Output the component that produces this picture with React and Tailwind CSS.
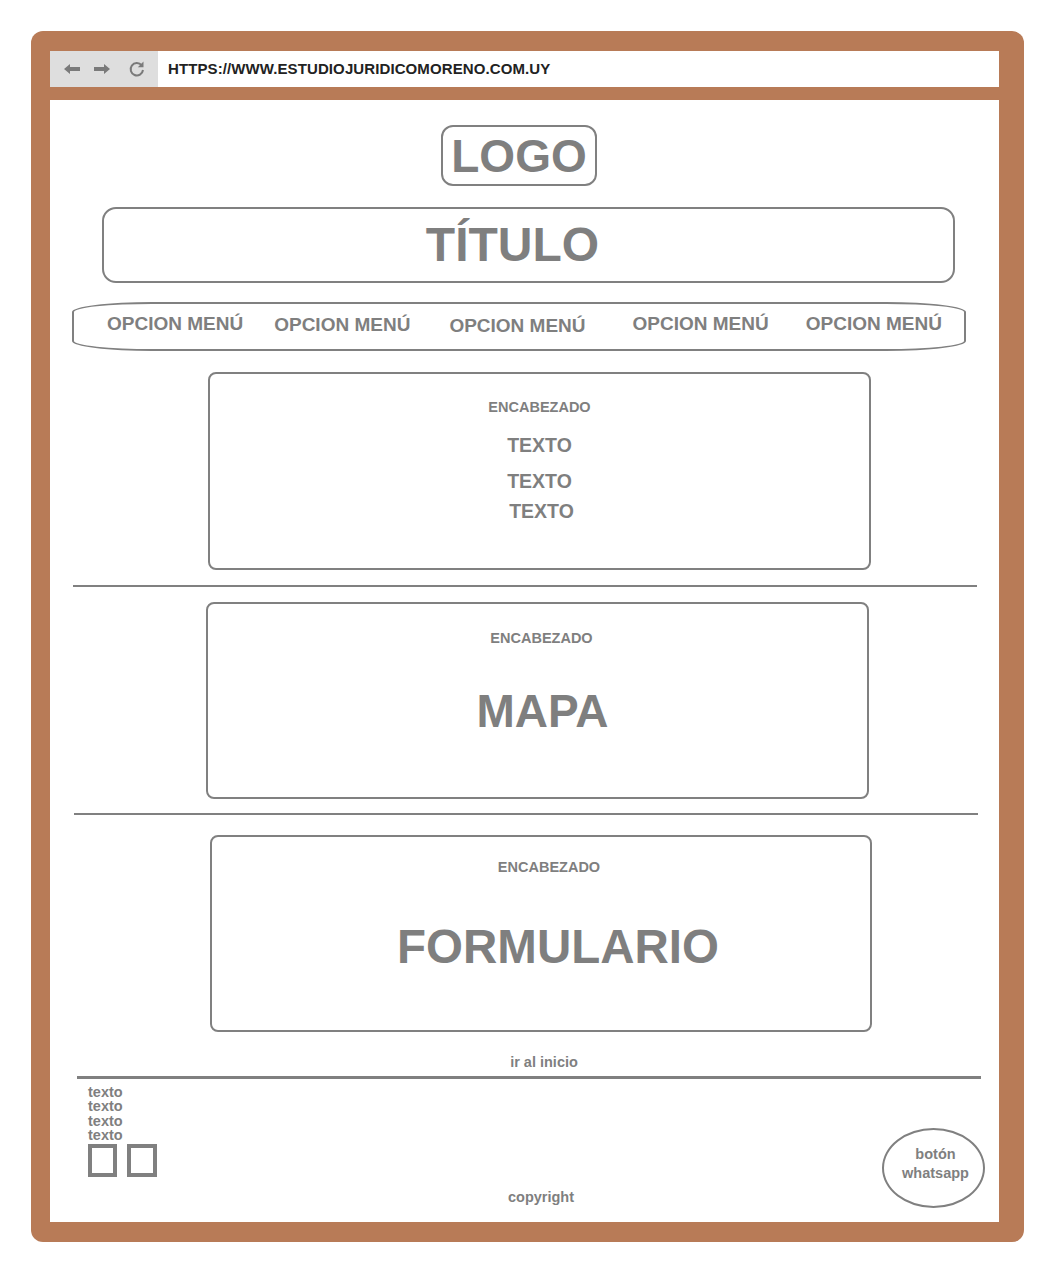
import React from 'react'

const menu = [
  { label: 'OPCION MENÚ', cls: 'ml-[33px]' },
  { label: 'OPCION MENÚ', cls: 'ml-[31px] mt-[1px]' },
  { label: 'OPCION MENÚ', cls: 'ml-[39px] mt-[2px]' },
  { label: 'OPCION MENÚ', cls: 'ml-[47px]' },
  { label: 'OPCION MENÚ', cls: 'ml-[37px]' },
]

function BrowserIcons(){
  return (
    <div className="w-[108px] h-full bg-[#dedede] flex items-center pl-[14px] gap-[14px]">
      <svg width="16" height="12" viewBox="0 0 16 12">
        <polygon points="0,6 6,1 6,4 16,4 16,8 6,8 6,11" fill="#7a7a7a" />
      </svg>
      <svg width="16" height="12" viewBox="0 0 16 12">
        <polygon points="16,6 10,1 10,4 0,4 0,8 10,8 10,11" fill="#7a7a7a" />
      </svg>
      <svg width="18" height="18" viewBox="0 0 18 18" className="ml-[4px]">
        <path d="M13.6 5.2 A6.2 6.2 0 1 0 15 10" fill="none" stroke="#7a7a7a" strokeWidth="2" />
        <polygon points="15.5,1.5 15.5,7.2 9.8,7.2" fill="#7a7a7a" />
      </svg>
    </div>
  )
}

export default function App(){
  return (
    <div className="w-[1056px] h-[1269px] bg-white pt-[31px] pl-[31px] font-['Liberation_Sans',Arial,sans-serif] text-[#7f7f7f]">
      <div className="w-[993px] h-[1211px] bg-[#b87b57] rounded-[12px] pt-[20px] pl-[19px] pr-[25px] pb-[20px]">
        {/* barra del navegador */}
        <div className="h-[36px] bg-white flex items-center">
          <BrowserIcons />
          <span className="ml-[10px] text-[15px] font-bold text-[#222] tracking-[0.1px]">HTTPS://WWW.ESTUDIOJURIDICOMORENO.COM.UY</span>
        </div>

        <div className="mt-[13px] h-[1122px] bg-white relative flex flex-col">
          <div className="mt-[25px] ml-[391px] w-[156px] h-[61px] border-2 border-[#808080] rounded-[12px] flex items-center justify-center">
            <span className="text-[46px] font-bold leading-none">LOGO</span>
          </div>

          <div className="mt-[21px] ml-[52px] w-[853px] h-[76px] border-2 border-[#808080] rounded-[14px] flex items-center justify-center pr-[32px]">
            <span className="text-[48px] font-bold leading-none">TÍTULO</span>
          </div>

          <div className="mt-[19px] ml-[22px] w-[894px] h-[49px] border-2 border-[#808080] rounded-[80px/10px] flex items-start pt-[8px]">
            {menu.map((m, i) => (
              <span key={i} className={`${m.cls} text-[19px] font-bold leading-[24px] whitespace-nowrap`}>{m.label}</span>
            ))}
          </div>

          <div className="mt-[21px] ml-[158px] w-[663px] h-[198px] border-2 border-[#808080] rounded-[8px] flex flex-col items-center pt-[23px]">
            <span className="text-[14.5px] font-bold leading-[20px]">ENCABEZADO</span>
            <span className="mt-[16px] text-[19.5px] font-bold leading-[24px]">TEXTO</span>
            <span className="mt-[12px] text-[19.5px] font-bold leading-[24px]">TEXTO</span>
            <span className="mt-[6px] ml-[4px] text-[19.5px] font-bold leading-[24px]">TEXTO</span>
          </div>

          <div className="mt-[15px] ml-[23px] w-[904px] h-[2px] bg-[#808080]" />

          <div className="mt-[15px] ml-[156px] w-[663px] h-[197px] border-2 border-[#808080] rounded-[8px] flex flex-col items-center pt-[24px]">
            <span className="ml-[8px] text-[14.5px] font-bold leading-[20px]">ENCABEZADO</span>
            <span className="mt-[37px] ml-[10px] text-[46px] font-bold leading-[52px]">MAPA</span>
          </div>

          <div className="mt-[14px] ml-[24px] w-[904px] h-[2px] bg-[#808080]" />

          <div className="mt-[20px] ml-[160px] w-[662px] h-[197px] border-2 border-[#808080] rounded-[8px] flex flex-col items-center pt-[20px]">
            <span className="ml-[16px] text-[14.5px] font-bold leading-[20px]">ENCABEZADO</span>
            <span className="mt-[44px] ml-[34px] text-[47.5px] font-bold leading-[52px]">FORMULARIO</span>
          </div>

          <div className="mt-[20px] ml-[460px] w-[68px] text-center text-[14.5px] font-bold leading-[20px]">ir al inicio</div>

          <div className="mt-[4px] ml-[27px] w-[904px] h-[3px] bg-[#808080]" />

          <div className="pl-[38px] mt-[6px] flex flex-col">
            <span className="text-[14.5px] font-bold leading-[14.3px]">texto</span>
            <span className="text-[14.5px] font-bold leading-[14.3px]">texto</span>
            <span className="text-[14.5px] font-bold leading-[14.3px]">texto</span>
            <span className="text-[14.5px] font-bold leading-[14.3px]">texto</span>
            <div className="mt-[2px] flex gap-[10px]">
              <div className="w-[29px] h-[33px] border-4 border-[#808080]" />
              <div className="w-[30px] h-[33px] border-4 border-[#808080]" />
            </div>
          </div>

          <div className="mt-[10px] ml-[455px] w-[72px] text-center text-[14.5px] font-bold leading-[20px]">copyright</div>

          <div className="absolute right-[14px] bottom-[14px] w-[103px] h-[80px] border-2 border-[#808080] rounded-[50%] flex flex-col items-center justify-center pb-[8px] pl-[4px]">
            <span className="text-[14.5px] font-bold leading-[19px]">botón</span>
            <span className="text-[14.5px] font-bold leading-[19px]">whatsapp</span>
          </div>
        </div>
      </div>
    </div>
  )
}
